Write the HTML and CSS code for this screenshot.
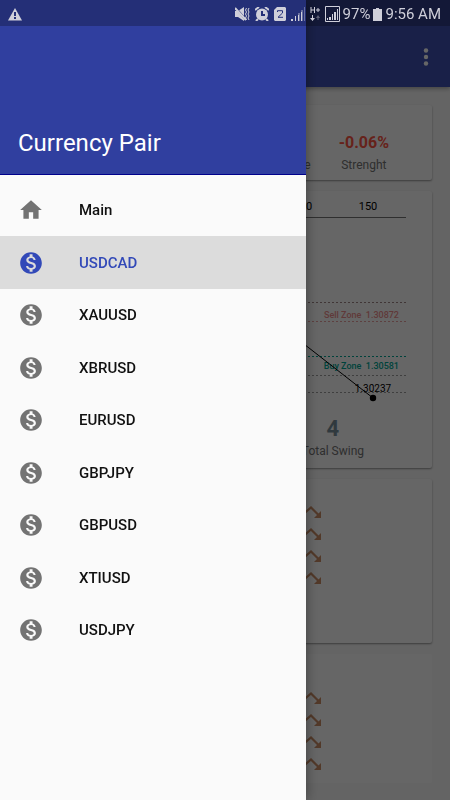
FILE: index.html
```html
<!DOCTYPE html>
<html lang="en">
<head>
    <meta charset="UTF-8">
    <meta name="viewport" content="width=device-width, initial-scale=1.0">
    <title>Currency Pair</title>
    <link rel="stylesheet" href="styles.css">
</head>
<body>
    <svg class="symbols" aria-hidden="true">
        <symbol id="icon-dollar" viewBox="0 0 24 24">
            <path d="M12 2C6.48 2 2 6.48 2 12s4.48 10 10 10 10-4.48 10-10S17.52 2 12 2zm1.41 16.09V20h-2.67v-1.93c-1.71-.36-3.16-1.46-3.27-3.4h1.96c.1 1.05.82 1.87 2.65 1.87 1.96 0 2.4-.98 2.4-1.59 0-.83-.44-1.61-2.67-2.14-2.48-.6-4.18-1.62-4.18-3.67 0-1.72 1.39-2.84 3.11-3.21V4h2.67v1.95c1.86.45 2.79 1.86 2.85 3.39H14.3c-.05-1.11-.64-1.87-2.22-1.87-1.5 0-2.4.68-2.4 1.64 0 .84.65 1.39 2.67 1.91s4.18 1.39 4.18 3.91c-.01 1.83-1.38 2.83-3.12 3.16z"/>
        </symbol>
        <symbol id="icon-trend" viewBox="0 0 22 14">
            <path d="M1 12l11-9.500 8 8" fill="none" stroke="currentColor" stroke-width="2.200"/>
            <path d="M22 6v7h-7z"/>
        </symbol>
    </svg>

    <div class="status-bar">
        <svg class="warning" width="14" height="13" viewBox="0 0 14 13"><path d="M7 0l7 12.500H0z"/><path class="cut" d="M6 4h2v4H6zM6 9h2v2H6z"/></svg>
        <div class="status-icons">
            <svg width="15" height="14" viewBox="0 0 15 14"><path d="M0 4h3l6-4v14L3 10H0z"/><path class="cut-line" d="M0 0l11 13"/><path class="line thick" d="M0 1l11 12"/><path class="line" d="M11.500 1l-1 2 1 2-1 2 1 2-1 2 1 2M14 1l-1 2 1 2-1 2 1 2-1 2 1 2"/></svg>
            <svg width="14" height="14" viewBox="0 0 14 14"><circle cx="7" cy="7.500" r="6"/><path class="line thick" d="M0 3l4-3M14 3l-4-3M3 12l-2 2M11 12l2 2"/><path class="cut-line" d="M7 4v4h3"/></svg>
            <svg width="12" height="14" viewBox="0 0 12 14"><path d="M3 0h8l1 1v12l-1 1H1l-1-1V3z"/><path class="cut-line thin" d="M3.500 5V3.700h5V6L4 10.300h5"/></svg>
            <svg width="14" height="14" viewBox="0 0 14 14"><path class="faint" d="M7 6h2v8H7zM10 3h2v11h-2zM13 0h1v14h-1z"/><path d="M0 12h2v2H0zM4 9h1v5H4zM7 8h1v6H7zM10 5h1v9h-1z"/></svg>
            <svg width="10" height="14" viewBox="0 0 10 14"><path class="line" d="M1 0v6M4.500 0v6M1 3h3M6 3h4M8 1v4"/><path d="M2 8h1v3h2l-2.500 3L0 11h2z"/><path class="faint" d="M6 11l2-3 2 3H8.500v2h-1v-2z"/></svg>
            <svg width="15" height="16" viewBox="0 0 15 16"><path class="line" d="M.5.5h14v15H.5z"/><path d="M2 12h1v2H2zM4 11h2v3H4zM7 8h1v6H7zM9 6h2v8H9zM12 3h1v11h-1z"/></svg>
        </div>
        <span>97%</span>
        <svg class="battery" width="9" height="13" viewBox="0 0 9 13"><path d="M3 0h3v1h3v12H0V1h3z"/></svg>
        <span>9:56 AM</span>
    </div>

    <div class="app">
        <header class="toolbar">
            <button class="more" aria-label="More options">
                <svg width="6" height="18" viewBox="0 0 6 18"><circle cx="3" cy="2.500" r="2.200"/><circle cx="3" cy="9" r="2.200"/><circle cx="3" cy="15.500" r="2.200"/></svg>
            </button>
        </header>
        <main class="content">
            <section class="card stats">
                <div class="stat">
                    <strong></strong>
                    <span>Price</span>
                </div>
                <div class="stat">
                    <strong>-0.06%</strong>
                    <span>Strenght</span>
                </div>
            </section>

            <section class="card">
                <svg class="chart" viewBox="0 0 414 222">
                    <text class="axis-label" x="285" y="19">100</text>
                    <text class="axis-label" x="350" y="19">150</text>
                    <path class="axis" d="M18 26.500H388"/>
                    <path class="limit sell" d="M18 111.500H388"/>
                    <path class="limit sell-light" d="M18 130.500H388"/>
                    <path class="limit buy" d="M18 165.500H388"/>
                    <path class="limit" d="M18 184.500H388M18 201.500H388"/>
                    <text class="zone sell-text" x="381" y="127">Sell Zone&#160; 1.30872</text>
                    <text class="zone buy-text" x="381" y="178">Buy Zone&#160; 1.30581</text>
                    <text class="value" x="355" y="201">1.30237</text>
                    <path class="price" d="M222 103L355 207"/>
                    <circle cx="355" cy="207" r="3.200"/>
                </svg>
                <div class="swing">
                    <div class="stat">
                        <strong>4</strong>
                        <span>Total Swing</span>
                    </div>
                </div>
            </section>

            <section class="card trends">
                <svg><use href="#icon-trend"/></svg>
                <svg><use href="#icon-trend"/></svg>
                <svg><use href="#icon-trend"/></svg>
                <svg><use href="#icon-trend"/></svg>
            </section>

            <section class="card trends trends-last">
                <svg><use href="#icon-trend"/></svg>
                <svg><use href="#icon-trend"/></svg>
                <svg><use href="#icon-trend"/></svg>
                <svg><use href="#icon-trend"/></svg>
            </section>
        </main>
    </div>

    <div class="scrim"></div>

    <aside class="drawer">
        <div class="drawer-header">
            <h1>Currency Pair</h1>
        </div>
        <nav>
            <ul>
                <li><a href="#main"><svg viewBox="0 0 24 24"><path d="M10 20v-6h4v6h5v-8h3L12 3 2 12h3v8z"/></svg>Main</a></li>
                <li><a href="#usdcad" class="active"><svg><use href="#icon-dollar"/></svg>USDCAD</a></li>
                <li><a href="#xauusd"><svg><use href="#icon-dollar"/></svg>XAUUSD</a></li>
                <li><a href="#xbrusd"><svg><use href="#icon-dollar"/></svg>XBRUSD</a></li>
                <li><a href="#eurusd"><svg><use href="#icon-dollar"/></svg>EURUSD</a></li>
                <li><a href="#gbpjpy"><svg><use href="#icon-dollar"/></svg>GBPJPY</a></li>
                <li><a href="#gbpusd"><svg><use href="#icon-dollar"/></svg>GBPUSD</a></li>
                <li><a href="#xtiusd"><svg><use href="#icon-dollar"/></svg>XTIUSD</a></li>
                <li><a href="#usdjpy"><svg><use href="#icon-dollar"/></svg>USDJPY</a></li>
            </ul>
        </nav>
    </aside>
</body>
</html>
```
FILE: styles.css
```css
* {
    box-sizing: border-box;
}

body {
    font-family: Roboto, sans-serif;
    margin: 0;
    background-color: #fafafa;
    height: 100vh;
    overflow: hidden;
}

.symbols {
    position: absolute;
    width: 0;
    height: 0;
}

/* Status bar */
.status-bar {
    position: fixed;
    top: 0;
    left: 0;
    right: 0;
    z-index: 4;
    display: flex;
    align-items: center;
    height: 26px;
    padding: 2px 9px 0 8px;
    gap: 3px;
    background-color: rgba(0, 0, 0, 0.25);
    color: #cfcfda;
    font-size: 15px;
}

.status-bar svg {
    fill: #cfcfda;
    flex-shrink: 0;
}

.status-bar .cut {
    fill: #242f77;
}

.status-bar .line {
    fill: none;
    stroke: #cfcfda;
}

.status-bar .thick {
    stroke-width: 2;
}

.status-bar .cut-line {
    fill: none;
    stroke: #242f77;
    stroke-width: 2;
}

.status-bar .cut-line.thin {
    stroke-width: 1;
}

.status-bar .faint {
    opacity: 0.4;
}

.status-icons {
    display: flex;
    align-items: center;
    gap: 5px;
    margin-left: auto;
}

/* App behind the drawer */
.app {
    display: flex;
    flex-direction: column;
    height: 100%;
}

.toolbar {
    display: flex;
    justify-content: flex-end;
    align-items: center;
    flex-shrink: 0;
    height: 87px;
    padding: 26px 16px 0;
    background-color: #3f51b5;
    box-shadow: 0 2px 4px rgba(0, 0, 0, 0.3);
}

.more {
    display: flex;
    padding: 4px 5px;
    border: none;
    background: none;
    fill: #fff;
    cursor: pointer;
}

.content {
    display: flex;
    flex-direction: column;
    gap: 11px;
    padding: 18px;
}

.card {
    background-color: #fff;
    border-radius: 2px;
    box-shadow: 0 1px 2px rgba(0, 0, 0, 0.4);
}

.stats {
    display: flex;
    justify-content: flex-end;
    gap: 28px;
    padding: 26px 43px 5px 18px;
}

.stat {
    display: flex;
    flex-direction: column;
    align-items: center;
    color: #757575;
    font-size: 12px;
    line-height: 20px;
}

.stat strong {
    min-height: 24px;
    color: #ff5544;
    font-size: 16px;
    font-weight: 700;
    line-height: 24px;
}

.chart {
    display: block;
    width: 100%;
}

.chart text {
    text-anchor: middle;
    font-size: 11px;
}

.chart .value {
    font-size: 10px;
}

.chart .zone {
    text-anchor: end;
    font-size: 9px;
    font-weight: 500;
}

.chart .sell-text {
    fill: #f09090;
}

.chart .buy-text {
    fill: #00a896;
}

.axis {
    stroke: #757575;
}

.limit {
    stroke: #9e9e9e;
    stroke-dasharray: 2 2;
}

.sell {
    stroke: #a08888;
}

.sell-light {
    stroke: #e8a0a0;
}

.buy {
    stroke: #00a896;
}

.price {
    stroke: #000;
}

.swing {
    display: flex;
    justify-content: flex-end;
    padding: 4px 68px 7px 18px;
}

.swing strong {
    color: #78909c;
    font-size: 22px;
}

.trends {
    display: flex;
    flex-direction: column;
    align-items: flex-end;
    gap: 8px;
    padding: 26px 111px 58px 18px;
}

.trends svg {
    width: 22px;
    height: 14px;
    color: #cc8f68;
    fill: #cc8f68;
}

.trends-last {
    padding-top: 37px;
    padding-bottom: 12px;
    box-shadow: none;
}

.scrim {
    position: fixed;
    inset: 0;
    z-index: 2;
    background-color: rgba(0, 0, 0, 0.6);
}

/* Drawer */
.drawer {
    position: fixed;
    top: 0;
    bottom: 0;
    left: 0;
    z-index: 3;
    width: 68%;
    background-color: #fafafa;
    box-shadow: 0 0 12px rgba(0, 0, 0, 0.4);
}

.drawer-header {
    display: flex;
    align-items: flex-end;
    height: 175px;
    padding: 0 18px 15px;
    background-color: #303f9f;
    border-bottom: 1px solid #00008b;
}

.drawer-header h1 {
    margin: 0;
    color: #fff;
    font-size: 24px;
    font-weight: 400;
    line-height: 32px;
}

.drawer ul {
    list-style: none;
    margin: 0;
    padding: 9px 0;
}

.drawer li {
    height: 52px;
}

.drawer li:nth-child(even) {
    height: 53px;
}

.drawer a {
    display: flex;
    align-items: center;
    gap: 35px;
    height: 100%;
    padding: 0 18px;
    color: #111;
    font-size: 15px;
    font-weight: 500;
    text-decoration: none;
}

.drawer a svg {
    width: 26px;
    height: 26px;
    fill: #737373;
}

.drawer a.active {
    background-color: #dcdcdc;
    color: #3249b8;
}

.drawer a.active svg {
    fill: #3249b8;
}
```
